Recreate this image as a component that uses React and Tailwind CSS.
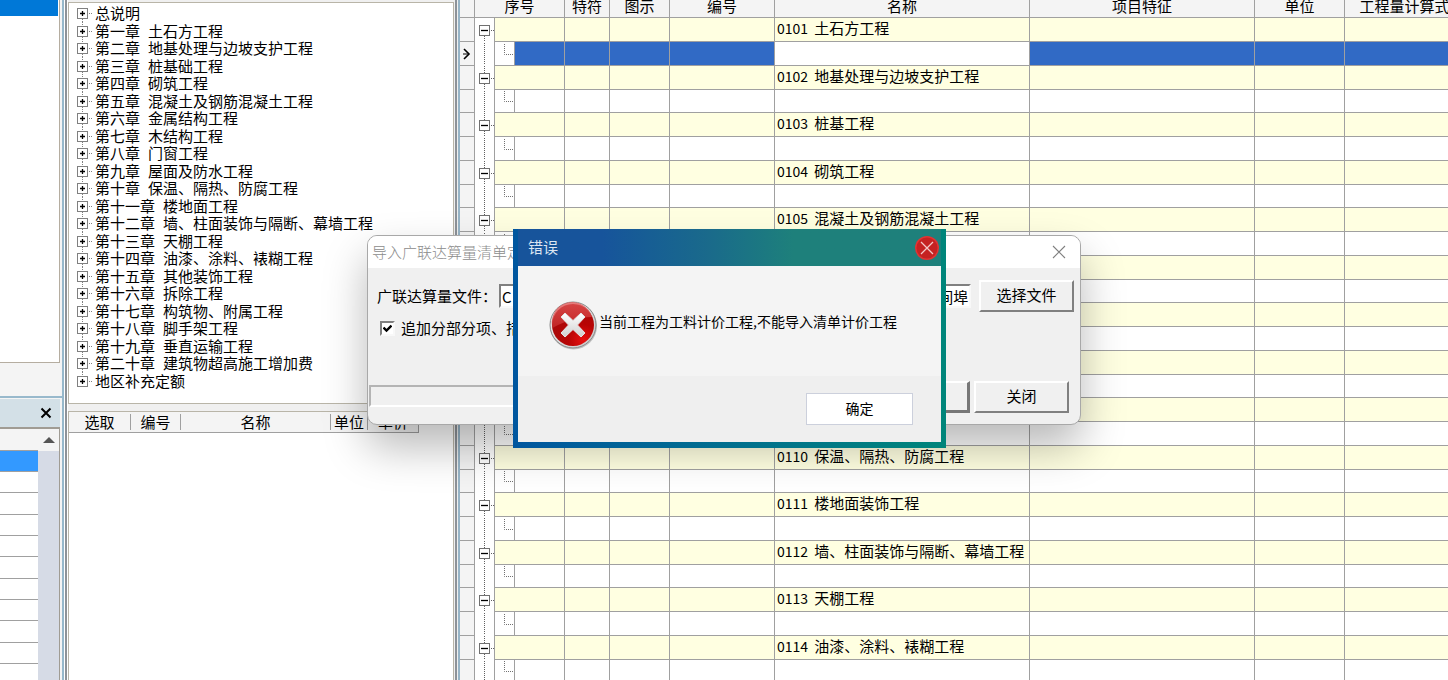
import { useState } from "react";
import clsx from "clsx";

const chapters = [
  ["总说明"],
  ["第一章", "土石方工程"],
  ["第二章", "地基处理与边坡支护工程"],
  ["第三章", "桩基础工程"],
  ["第四章", "砌筑工程"],
  ["第五章", "混凝土及钢筋混凝土工程"],
  ["第六章", "金属结构工程"],
  ["第七章", "木结构工程"],
  ["第八章", "门窗工程"],
  ["第九章", "屋面及防水工程"],
  ["第十章", "保温、隔热、防腐工程"],
  ["第十一章", "楼地面工程"],
  ["第十二章", "墙、柱面装饰与隔断、幕墙工程"],
  ["第十三章", "天棚工程"],
  ["第十四章", "油漆、涂料、裱糊工程"],
  ["第十五章", "其他装饰工程"],
  ["第十六章", "拆除工程"],
  ["第十七章", "构筑物、附属工程"],
  ["第十八章", "脚手架工程"],
  ["第十九章", "垂直运输工程"],
  ["第二十章", "建筑物超高施工增加费"],
  ["地区补充定额"],
];

const sections = [
  ["0101", "土石方工程"],
  ["0102", "地基处理与边坡支护工程"],
  ["0103", "桩基工程"],
  ["0104", "砌筑工程"],
  ["0105", "混凝土及钢筋混凝土工程"],
  ["0106", "金属结构工程"],
  ["0107", "木结构工程"],
  ["0108", "门窗工程"],
  ["0109", "屋面及防水工程"],
  ["0110", "保温、隔热、防腐工程"],
  ["0111", "楼地面装饰工程"],
  ["0112", "墙、柱面装饰与隔断、幕墙工程"],
  ["0113", "天棚工程"],
  ["0114", "油漆、涂料、裱糊工程"],
];

const FILE_PATH = "C" + "\u3000".repeat(28) + "  间埠";

function ChapterIcon({ first, last }) {
  return (
    <svg width="19" height="18" viewBox="0 0 19 18" className="shrink-0" aria-hidden="true">
      {!first && <path d="M6.5 0V4" stroke="#808080" strokeDasharray="1 1" />}
      {!last && <path d="M6.5 15V18" stroke="#808080" strokeDasharray="1 1" />}
      <path d="M13 9.5H17" stroke="#808080" strokeDasharray="1 1" />
      <rect x="1.5" y="4.5" width="10" height="10" fill="#fff" stroke="#808080" />
      <path d="M4 9.5H9M6.5 7V12" stroke="#000" strokeWidth="1.3" />
    </svg>
  );
}

function GroupIcon({ first }) {
  return (
    <svg width="19" height="24" viewBox="0 0 19 24" className="block" aria-hidden="true">
      {!first && <path d="M9.5 0V7" stroke="#606060" strokeDasharray="1 1" />}
      <path d="M9.5 18V24" stroke="#606060" strokeDasharray="1 1" />
      <path d="M16 12.5H19" stroke="#606060" strokeDasharray="1 1" />
      <rect x="4.5" y="7.5" width="10" height="10" fill="#fff" stroke="#707070" />
      <path d="M6 12.5H13" stroke="#000" strokeWidth="1.3" />
    </svg>
  );
}

function SidePanel() {
  return (
    <aside className="flex w-[62px] shrink-0 flex-col bg-[#f4f4f4]">
      <div className="mr-[2px] h-[363px] shrink-0 border-r border-b border-[#b5ada0] bg-white">
        <div className="mr-px h-4 bg-[#0078d7]" />
      </div>
      <div className="h-[33px] shrink-0" />
      <div className="h-[2px] shrink-0 bg-[#98b9cc]" />
      <div className="mt-px mr-[2px] flex h-7 shrink-0 items-center justify-end bg-[#d3e0e7] pr-2">
        <button type="button" aria-label="关闭" className="h-3 w-3">
          <svg width="12" height="12" viewBox="0 0 12 12">
            <path d="M1.5 1.5L10.5 10.5M10.5 1.5L1.5 10.5" stroke="#000" strokeWidth="2" />
          </svg>
        </button>
      </div>
      <div className="mr-[2px] flex min-h-0 flex-1 border-t-2 border-r border-[#a09c94]">
        <div className="flex-1">
          <div className="h-[22px] border-b border-[#a0a0a0] bg-[#f4f4f4]" />
          {Array.from({ length: 11 }, (_, i) => (
            <div
              key={i}
              className={clsx(
                "border-b border-[#a0a0a0]",
                i % 3 === 2 ? "h-[22px]" : "h-[21px]",
                i === 0 ? "bg-[#3399ff]" : "bg-white"
              )}
            />
          ))}
        </div>
        <div className="w-[21px] bg-[#d6dbe6]">
          <div className="flex h-[22px] items-center justify-center bg-[#f4f4f4]">
            <svg width="12" height="6" viewBox="0 0 12 6">
              <path d="M0 6L6 0L12 6Z" fill="#555" />
            </svg>
          </div>
        </div>
      </div>
    </aside>
  );
}

function CatalogPanel() {
  return (
    <section className="flex w-[386px] shrink-0 flex-col bg-[#f0f0f0]">
      <ul className="mt-[2px] h-[402px] shrink-0 border border-[#b9b5a8] bg-white py-px pl-[7px]">
        {chapters.map(([no, title], i) => (
          <li
            key={no}
            className={clsx(
              "flex items-center gap-2 whitespace-nowrap",
              i % 2 ? "h-[17px] leading-[17px]" : "h-[18px] leading-[18px]"
            )}
          >
            <span className="flex items-center">
              <ChapterIcon first={i === 0} last={i === chapters.length - 1} />
              {no}
            </span>
            {title && <span>{title}</span>}
          </li>
        ))}
      </ul>
      <div className="mt-[7px] flex-1 border-x border-t border-[#b9b5a8] bg-white">
        <table className="w-[350px] table-fixed border-separate border-spacing-0 border-r border-b border-[#a0a0a0] bg-[#f4f4f4]">
          <thead>
            <tr className="h-5">
              <HeadCell className="w-[62px]">选取</HeadCell>
              <HeadCell className="w-[50px]">编号</HeadCell>
              <HeadCell className="w-[150px]">名称</HeadCell>
              <HeadCell className="w-[37px]">单位</HeadCell>
              <HeadCell last>单价</HeadCell>
            </tr>
          </thead>
        </table>
      </div>
    </section>
  );
}

function HeadCell({ className, last, children }) {
  return (
    <th className={clsx("p-0 font-normal", className)}>
      <div className={clsx("h-4 leading-4 whitespace-nowrap", !last && "border-r border-[#a0a0a0]")}>
        {children}
      </div>
    </th>
  );
}

function GridHead({ children, ...props }) {
  return (
    <th className="border-r border-b border-[#a0a0a0] p-0 align-top leading-3 font-normal" {...props}>
      {children}
    </th>
  );
}

function Cell({ className, ...props }) {
  return <td className={clsx("border-r border-b border-[#a0a0a0] p-0", className)} {...props} />;
}

function SectionRows({ code, title, index }) {
  const selected = index === 0;
  const fill = selected ? "bg-[#316ac5]" : "bg-white";
  return (
    <>
      <tr className="h-6 bg-[#ffffe1]">
        <Cell className="bg-[#f4f4f4]" />
        <td className="border-r border-[#a0a0a0] bg-white p-0">
          <GroupIcon first={index === 0} />
        </td>
        <Cell colSpan={2} />
        <Cell />
        <Cell />
        <Cell />
        <Cell className="align-top">
          <div className="flex h-5 items-center gap-1.5 pl-[2px] leading-5 whitespace-nowrap">
            <span className="text-[14px]">{code}</span>
            <span>{title}</span>
          </div>
        </Cell>
        <Cell />
        <Cell />
        <Cell />
      </tr>
      <tr className={index % 2 ? "h-[23px]" : "h-6"}>
        <Cell className="bg-[#f4f4f4]">
          {selected && (
            <svg width="10" height="12" viewBox="0 0 10 12" className="ml-[2px] block">
              <path d="M2 1L7 6L2 11" fill="none" stroke="#000" strokeWidth="1.6" />
              <path d="M1 6H6" stroke="#000" />
            </svg>
          )}
        </Cell>
        <td className="border-r border-[#a0a0a0] bg-white p-0">
          <svg width="19" height="22" viewBox="0 0 19 22" className="block">
            <path d="M9.5 0V22" stroke="#606060" strokeDasharray="1 1" />
          </svg>
        </td>
        <Cell className="bg-white">
          <svg width="19" height="22" viewBox="0 0 19 22" className="block">
            <path d="M9.5 1V11.5H18" fill="none" stroke="#707070" strokeDasharray="1 1" />
          </svg>
        </Cell>
        <Cell className={fill} />
        <Cell className={fill} />
        <Cell className={fill} />
        <Cell className={fill} />
        <Cell className="bg-white" />
        <Cell className={fill} />
        <Cell className={fill} />
        <Cell className={fill} />
      </tr>
    </>
  );
}

function BillGrid() {
  return (
    <main className="min-w-0 flex-1 overflow-hidden bg-white">
      <table className="w-[1005px] min-w-full table-fixed border-separate border-spacing-0">
        <colgroup>
          <col className="w-[15px]" />
          <col className="w-5" />
          <col className="w-5" />
          <col className="w-[50px]" />
          <col className="w-[45px]" />
          <col className="w-[60px]" />
          <col className="w-[105px]" />
          <col className="w-[255px]" />
          <col className="w-[225px]" />
          <col className="w-[90px]" />
          <col className="w-[120px]" />
        </colgroup>
        <thead className="bg-[#f4f4f4]">
          <tr className="h-[18px]">
            <GridHead />
            <GridHead colSpan={3}>序号</GridHead>
            <GridHead>特符</GridHead>
            <GridHead>图示</GridHead>
            <GridHead>编号</GridHead>
            <GridHead>名称</GridHead>
            <GridHead>项目特征</GridHead>
            <GridHead>单位</GridHead>
            <GridHead>工程量计算式</GridHead>
          </tr>
        </thead>
        <tbody>
          {sections.map(([code, title], i) => (
            <SectionRows key={code} code={code} title={title} index={i} />
          ))}
        </tbody>
      </table>
    </main>
  );
}

function ClassicButton({ isDefault, className, children, ...props }) {
  return (
    <button
      type="button"
      className={clsx(
        "h-8 w-[95px] shrink-0 border-t-2 border-l-2 border-t-white border-l-white bg-[#f0f0f0] pb-px",
        isDefault ? "border-r-3 border-b-3 border-r-[#777] border-b-[#777]" : "border-r-2 border-b-2 border-r-[#808080] border-b-[#808080]",
        className
      )}
      {...props}
    >
      {children}
    </button>
  );
}

function ImportDialog() {
  const [append, setAppend] = useState(true);

  return (
    <div
      role="dialog"
      aria-label="导入"
      className="absolute top-[235px] left-[367px] flex h-[190px] w-[714px] flex-col overflow-hidden rounded-[10px] border border-[#a8a8a8] bg-[#f0f0f0] shadow-[0_22px_44px_rgba(0,0,0,0.28)]"
    >
      <div className="flex h-8 shrink-0 items-center justify-between bg-white pr-3.5 pl-1 text-[#8c8c8c]">
        <span className="font-light">导入广联达算量清单定</span>
        <button type="button" aria-label="关闭">
          <svg width="14" height="14" viewBox="0 0 14 14">
            <path d="M1 1L13 13M13 1L1 13" stroke="#808080" strokeWidth="1.1" />
          </svg>
        </button>
      </div>
      <div className="mt-3 flex items-center pr-1.5 pl-[9px]">
        <label htmlFor="file" className="w-[122px] whitespace-nowrap">广联达算量文件：</label>
        <input
          id="file"
          type="text"
          readOnly
          value={FILE_PATH}
          className="h-6 min-w-0 flex-1 border-2 border-t-[#808080] border-r-[#f8f8f8] border-b-[#f8f8f8] border-l-[#808080] bg-white pl-px outline-none"
        />
        <ClassicButton className="ml-2">选择文件</ClassicButton>
      </div>
      <div className="mt-1.5 flex items-center gap-1.5 pl-3">
        <span className="relative flex h-[15px] w-[15px] items-center justify-center">
          <input
            id="append"
            type="checkbox"
            checked={append}
            onChange={(e) => setAppend(e.target.checked)}
            className="h-[15px] w-[15px] appearance-none border-2 border-t-[#808080] border-r-[#f8f8f8] border-b-[#f8f8f8] border-l-[#808080] bg-white"
          />
          {append && (
            <svg width="9" height="9" viewBox="0 0 9 9" className="pointer-events-none absolute">
              <path d="M0.500 3.500L3.500 6.500L8.500 1.500" fill="none" stroke="#000" strokeWidth="2.4" />
            </svg>
          )}
        </span>
        <label htmlFor="append" className="leading-5">追加分部分项、措</label>
      </div>
      <div className="mt-auto mb-[11px] flex items-start pr-[11px] pl-px">
        <div className="mt-1 mr-2 h-[22px] flex-1 border-2 border-t-[#b4b4b4] border-r-white border-b-white border-l-[#b4b4b4]" />
        <ClassicButton isDefault className="mr-1" aria-label="导入" />
        <ClassicButton>关闭</ClassicButton>
      </div>
    </div>
  );
}

function ErrorIcon() {
  return (
    <svg width="50" height="50" viewBox="0 0 50 50" className="shrink-0" aria-hidden="true">
      <defs>
        <radialGradient id="ball" cx="0.75" cy="0.85" r="0.9">
          <stop offset="0" stopColor="#e81010" />
          <stop offset="0.4" stopColor="#b80404" />
          <stop offset="1" stopColor="#a40c0c" />
        </radialGradient>
        <linearGradient id="gloss" x1="0" y1="0" x2="0" y2="1">
          <stop offset="0" stopColor="#e85a5a" />
          <stop offset="1" stopColor="#c83030" />
        </linearGradient>
        <linearGradient id="rim" x1="0" y1="0" x2="1" y2="1">
          <stop offset="0" stopColor="#f4f4f4" />
          <stop offset="1" stopColor="#c4c4c4" />
        </linearGradient>
        <linearGradient id="cross" x1="0" y1="0" x2="0" y2="1">
          <stop offset="0" stopColor="#fff" />
          <stop offset="1" stopColor="#d0d0d0" />
        </linearGradient>
      </defs>
      <circle cx="25.5" cy="26" r="23.5" fill="#000" opacity="0.2" />
      <circle cx="25" cy="25" r="23" fill="url(#rim)" stroke="#8a8a8a" />
      <circle cx="25" cy="25" r="21" fill="url(#ball)" />
      <path d="M4.5 28A20.5 20.5 0 0 1 44 17C32 17 18 20 4.5 28Z" fill="url(#gloss)" opacity="0.75" />
      <path
        d="M13 17L17 13L25 20.500L33 13L37 17L29.500 25L37 33L33 37L25 29.500L17 37L13 33L20.500 25Z"
        fill="url(#cross)"
        stroke="#e4e4e4"
        strokeLinejoin="round"
      />
    </svg>
  );
}

function ErrorDialog() {
  return (
    <div
      role="alertdialog"
      aria-labelledby="error-title"
      className="absolute top-[229px] left-[513px] flex h-[219px] w-[433px] flex-col bg-linear-to-r from-[#00569f] to-[#00857a] px-[5px] pb-1.5 text-[14px]"
    >
      <div className="flex h-[37px] shrink-0 items-center justify-between bg-linear-to-r from-[#17549b] from-20% via-[#1a6a8b] via-45% to-[#1e807b] to-65% pr-[2px] pl-2.5">
        <span id="error-title" className="text-[15px] text-[#dce6f2]">错误</span>
        <button type="button" aria-label="关闭">
          <svg width="24" height="24" viewBox="0 0 24 24" className="block">
            <circle cx="12" cy="12" r="12" fill="#e03434" />
            <circle cx="12" cy="12" r="10.500" fill="#c52222" />
            <path d="M6 6L18 18M18 6L6 18" stroke="#f4c8c8" strokeWidth="1.3" />
          </svg>
        </button>
      </div>
      <div className="flex h-[110px] shrink-0 items-center bg-[#f4f4f4] pt-2 pl-[30px]">
        <ErrorIcon />
        <p className="pb-2 pl-px leading-5 whitespace-nowrap">当前工程为工料计价工程,不能导入清单计价工程</p>
      </div>
      <div className="flex flex-1 items-center justify-end bg-[#efefef] pr-7">
        <button type="button" className="h-8 w-[107px] border border-[#ccd0dc] bg-white pb-[2px]">确定</button>
      </div>
    </div>
  );
}

export default function App() {
  return (
    <div className="relative flex h-screen overflow-hidden bg-white font-['Noto_Sans_CJK_SC',sans-serif] text-[15px] text-black">
      <SidePanel />
      {/* Splitters between the docked panels */}
      <div className="w-1.5 shrink-0 border-r border-white bg-white">
        <div className="h-full border-r-2 border-l-2 border-r-[#8d9298] border-l-[#96b8cb]" />
      </div>
      <CatalogPanel />
      <div className="w-1.5 shrink-0 bg-[#f0f0f0] pl-px">
        <div className="h-full border-r-2 border-l-2 border-r-[#96b4c6] border-l-[#8d9298]" />
      </div>
      <BillGrid />
      <ImportDialog />
      <ErrorDialog />
    </div>
  );
}
